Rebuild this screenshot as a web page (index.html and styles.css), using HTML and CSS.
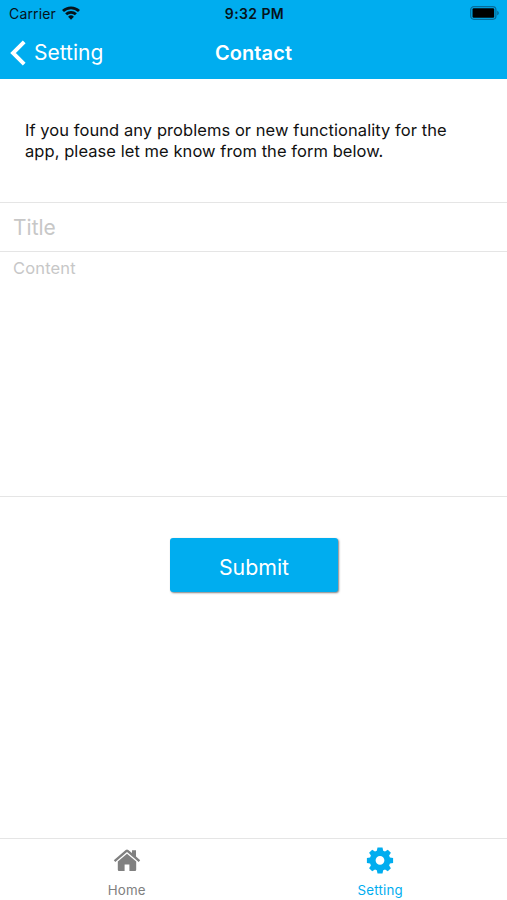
FILE: index.html
```html
<!DOCTYPE html>
<html lang="en">
<head>
  <meta charset="UTF-8">
  <title>Contact</title>
  <link rel="stylesheet" href="styles.css">
</head>
<body>

<!-- HEADER -->
<header class="header">
  <div class="status-bar">
    <div class="carrier">
      <span>Carrier</span>
      <svg class="wifi" viewBox="0 0 18 14" fill="none" stroke="#06131a" stroke-width="2.8">
        <path d="M1 5.1a11.4 11.4 0 0 1 16 0"/>
        <path d="M4.1 8.3a7 7 0 0 1 9.8 0"/>
        <path d="M9 13.7L6.1 10.8a4.1 4.1 0 0 1 5.8 0z" fill="#06131a" stroke="none"/>
      </svg>
    </div>
    <span class="time">9:32 PM</span>
    <svg class="battery" viewBox="0 0 30 14">
      <rect x=".7" y=".7" width="25.2" height="12.6" rx="3.2" fill="none" stroke="#056d9b" stroke-width="1.3"/>
      <rect x="2.5" y="2.3" width="21.7" height="9.4" rx="1.2" fill="#000"/>
      <path d="M27.2 4.7c2.2 1 2.2 3.6 0 4.6z" fill="#056d9b"/>
    </svg>
  </div>
  <nav class="nav-bar">
    <a class="back">
      <svg class="chevron" viewBox="0 0 16 26"><path d="M14.2 1.8L3 13l11.2 11.2" fill="none" stroke="#fff" stroke-width="3.9"/></svg>
      <span>Setting</span>
    </a>
    <h1>Contact</h1>
    <span></span>
  </nav>
</header>

<!-- FORM -->
<main class="content">
  <p class="message">If you found any problems or new functionality for the<br>app, please let me know from the form below.</p>
  <input class="title-input" type="text" placeholder="Title">
  <textarea class="content-input" placeholder="Content"></textarea>
  <button class="submit-btn">Submit</button>
</main>

<!-- TAB BAR -->
<footer class="tab-bar">
  <a class="tab">
    <svg class="tab-icon" viewBox="0 0 28 28" fill="#808080">
      <path d="M.8 14.2L12.7 3.9q1.3-1 2.6 0L19 7V4.2h4v6.4l4.2 3.6-1.5 1.8L14 6.1 2.3 16z"/>
      <path d="M14 7.7l9.2 7.7v8.3q0 1.2-1.2 1.2h-5.6v-6.5h-4.8v6.5H6q-1.2 0-1.2-1.2v-8.3z"/>
    </svg>
    <span>Home</span>
  </a>
  <a class="tab active">
    <svg class="tab-icon" viewBox="0 0 28 28" fill="#00adef">
      <path fill-rule="evenodd" d="M11.5 1.5h5l.7 3.2 1.8.8 2.8-1.8 3.1 3.1-1.8 2.8.8 1.8 3.2.6v5l-3.2.6-.8 1.8 1.8 2.8-3.1 3.1-2.8-1.8-1.8.8-.7 3.2h-5l-.7-3.2-1.8-.8-2.8 1.8-3.1-3.1 1.8-2.8-.8-1.8-3.2-.6v-5l3.2-.6.8-1.8-1.8-2.8 3.1-3.1L9 5.5l1.8-.8zM14 9.9a4.4 4.4 0 1 0 0 8.8 4.4 4.4 0 0 0 0-8.8z"/>
    </svg>
    <span>Setting</span>
  </a>
</footer>

</body>
</html>
```
FILE: styles.css
```css
* { box-sizing: border-box; }
body {
  margin: 0;
  height: 900px;
  display: flex;
  flex-direction: column;
  overflow: hidden;
  background: #fff;
  color: #111;
  font-family: Inter, sans-serif;
}
.header {
  height: 79px;
  background: #00adef;
}
.status-bar, .nav-bar {
  display: grid;
  grid-template-columns: 1fr auto 1fr;
  align-items: center;
}
.status-bar {
  height: 26px;
  padding: 0 7px 0 9px;
  font-size: 14px;
  letter-spacing: 0.15px;
  color: #06131a;
}
.status-bar span { padding-top: 1px; }
.carrier, .back {
  display: flex;
  align-items: center;
}
.carrier { gap: 6px; }
.wifi { width: 18px; height: 14px; }
.time { font-weight: 600; letter-spacing: 0.4px; }
.battery { width: 30px; height: 14px; justify-self: end; }
.nav-bar {
  height: 53px;
  padding: 0 10px;
  color: #fff;
}
.back { gap: 8px; font-size: 21px; }
.chevron { width: 16px; height: 26px; }
h1 { margin: 0; font-size: 20px; font-weight: 600; letter-spacing: 0.1px; }
.content {
  flex: 1;
  display: flex;
  flex-direction: column;
}
.message {
  margin: 0;
  height: 123px;
  padding: 41px 25px 0;
  font-size: 16.5px;
  letter-spacing: 0.06px;
  line-height: 21px;
  white-space: nowrap;
}
input, textarea {
  width: 100%;
  border: 0;
  border-top: 1px solid #e5e5e5;
  border-radius: 0;
  outline: none;
  resize: none;
  font-family: inherit;
}
.title-input {
  height: 49px;
  padding: 0 13px;
  font-size: 21px;
}
.content-input {
  height: 246px;
  padding: 6px 13px;
  border-bottom: 1px solid #e5e5e5;
  font-size: 16.5px;
  letter-spacing: 0.15px;
  line-height: 20px;
}
::placeholder { color: #c7c7c7; opacity: 1; }
.submit-btn {
  align-self: center;
  width: 168px;
  height: 54px;
  margin-top: 41px;
  padding: 3px 0 0 1px;
  border: 0;
  border-radius: 3px;
  background: #00adef;
  color: #fff;
  font-family: inherit;
  font-size: 21.3px;
  box-shadow: 1px 1px 2px rgba(0,0,0,0.5);
}
.tab-bar {
  height: 62px;
  display: flex;
  border-top: 1px solid #e5e5e5;
}
.tab {
  flex: 1;
  display: flex;
  flex-direction: column;
  align-items: center;
  padding-top: 7px;
  gap: 7px;
  color: #808080;
  font-size: 13.3px;
  letter-spacing: 0.2px;
  line-height: 18px;
}
.active { color: #00adef; }
.tab-icon { width: 28px; height: 28px; }
```
